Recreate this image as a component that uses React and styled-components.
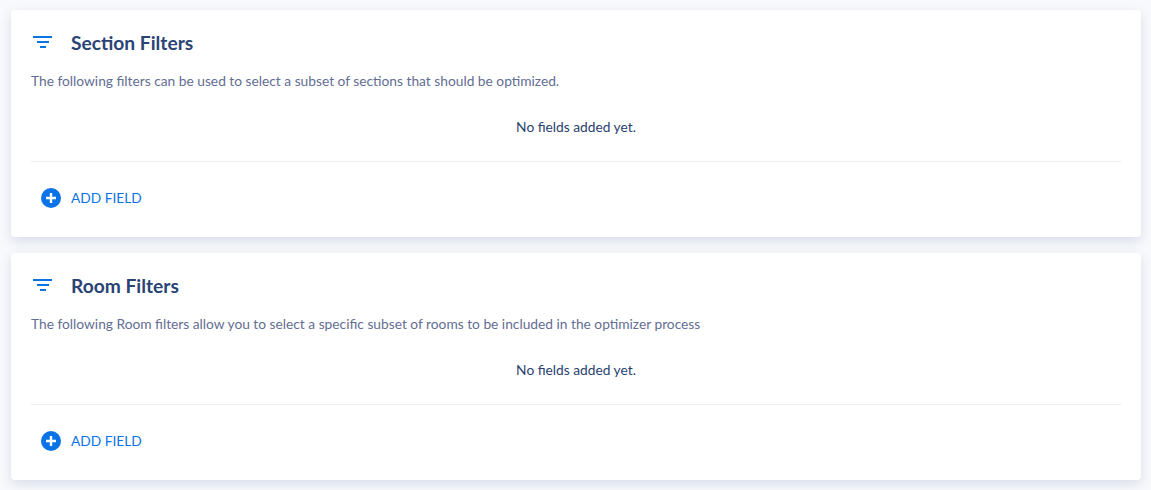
import React from 'react';
import styled, {createGlobalStyle} from 'styled-components';

const GlobalStyle = createGlobalStyle`
  html, body {
    margin: 0;
    padding: 0;
    background: #f8f9fc;
    font-family: Lato, "Open Sans", sans-serif;
  }
`;

const Page = styled.div`
  display: flex;
  flex-direction: column;
  gap: 16px;
  padding: 10px 10px 10px 11px;
`;

const Card = styled.section`
  height: 227px;
  box-sizing: border-box;
  padding: 15px 20px 0;
  background: #fff;
  border-radius: 4px;
  box-shadow: 0 4px 12px rgba(42, 76, 130, 0.16);
`;

const Header = styled.div`
  display: flex;
  align-items: center;
  height: 34px;
`;

const IconSlot = styled.span`
  display: flex;
  width: 40px;
  padding-left: 2px;
  box-sizing: border-box;
`;

const Title = styled.h2`
  margin: 0;
  font-size: 19.2px;
  font-weight: 700;
  color: #2a4375;
`;

const Description = styled.p`
  margin: 12px 0 0;
  height: 20px;
  font-size: 13.76px;
  line-height: 20px;
  color: #636e92;
`;

const Empty = styled.div`
  margin-top: 26px;
  height: 20px;
  font-size: 13.76px;
  line-height: 20px;
  text-align: center;
  color: #2a3f6e;
`;

const Divider = styled.hr`
  margin: 24px 0 0;
  border: 0;
  border-top: 1px solid #ebedf2;
`;

const AddButton = styled.button`
  display: flex;
  align-items: center;
  gap: 10px;
  margin-top: 26px;
  padding: 0 0 0 10px;
  border: 0;
  background: none;
  font-family: inherit;
  font-size: 13.76px;
  line-height: 20px;
  color: #0a74e6;
`;

const FilterIcon = () => (
  <svg width="20" height="12" viewBox="0 0 20 12" fill="#0a74e6">
    <rect x="0" y="0" width="19" height="2" />
    <rect x="4" y="5" width="12" height="2" />
    <rect x="7" y="10" width="6" height="2" />
  </svg>
);

const PlusIcon = () => (
  <svg width="20" height="20" viewBox="0 0 20 20">
    <circle cx="10" cy="10" r="10" fill="#0a74e6" />
    <path d="M10 5v10M5 10h10" stroke="#fff" strokeWidth="2.4" />
  </svg>
);

const FilterCard = ({title, text}) => (
  <Card>
    <Header>
      <IconSlot><FilterIcon /></IconSlot>
      <Title>{title}</Title>
    </Header>
    <Description>{text}</Description>
    <Empty>No fields added yet.</Empty>
    <Divider />
    <AddButton><PlusIcon />ADD FIELD</AddButton>
  </Card>
);

export default function App() {
  return (
    <Page>
      <GlobalStyle />
      <FilterCard
        title="Section Filters"
        text="The following filters can be used to select a subset of sections that should be optimized."
      />
      <FilterCard
        title="Room Filters"
        text="The following Room filters allow you to select a specific subset of rooms to be included in the optimizer process"
      />
    </Page>
  );
}
